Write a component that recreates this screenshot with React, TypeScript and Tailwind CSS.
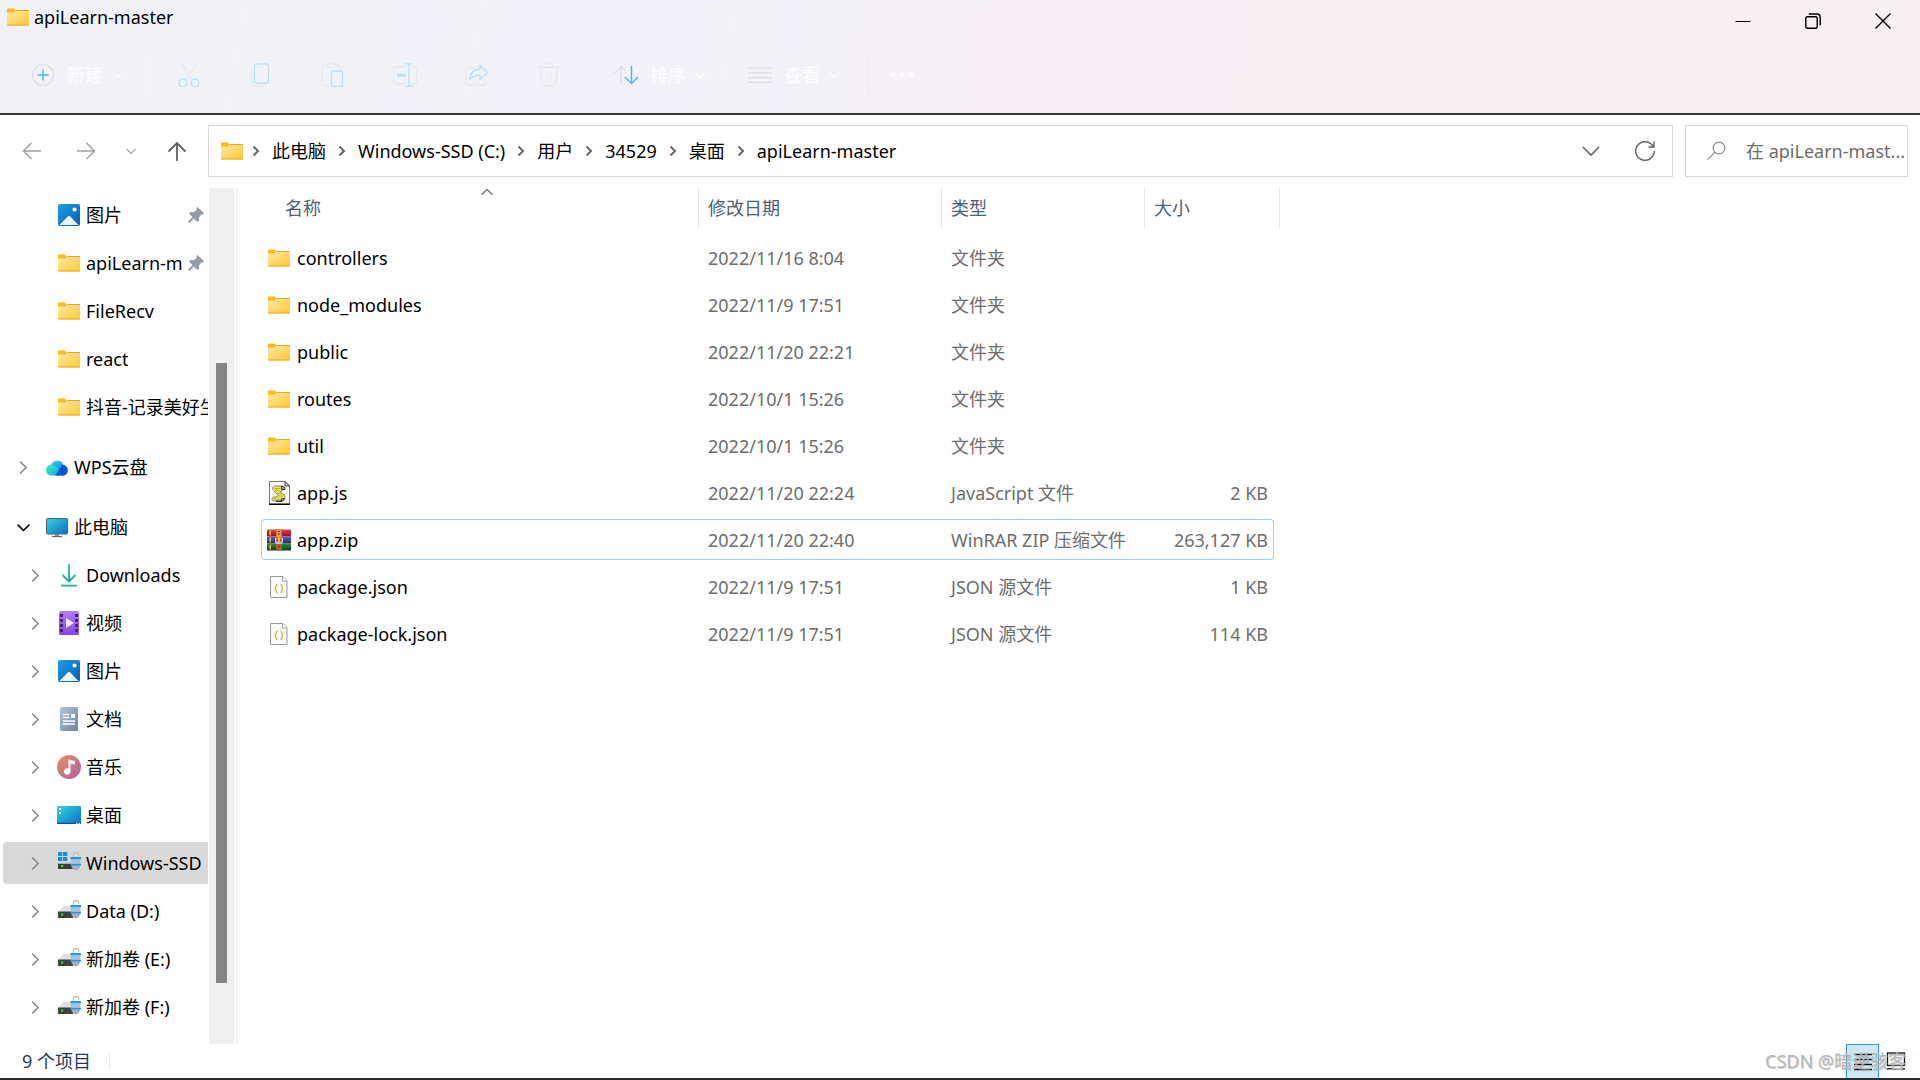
import type { ReactNode } from 'react'

type IconName =
  | 'folder'
  | 'picture'
  | 'cloud'
  | 'pc'
  | 'download'
  | 'video'
  | 'document'
  | 'music'
  | 'desktop'
  | 'system'
  | 'drive'
  | 'js'
  | 'zip'
  | 'json'

function Gradients() {
  return (
    <svg width="0" height="0" className="absolute" aria-hidden="true">
      <defs>
        <linearGradient id="folder" x1="0" y1="0" x2="1" y2="1">
          <stop offset="0" stopColor="#ffe9a6" />
          <stop offset="1" stopColor="#ffc832" />
        </linearGradient>
        <linearGradient id="picture" x1="0" y1="0" x2="1" y2="1">
          <stop offset="0" stopColor="#1ba0e6" />
          <stop offset="1" stopColor="#0a5cb4" />
        </linearGradient>
        <linearGradient id="screen" x1="0" y1="0" x2="1" y2="1">
          <stop offset="0" stopColor="#33d6e6" />
          <stop offset="1" stopColor="#0b6cc4" />
        </linearGradient>
        <linearGradient id="cloudLeft" x1="0" y1="0" x2="1" y2="1">
          <stop offset="0" stopColor="#3ff0b8" />
          <stop offset="1" stopColor="#12a8f0" />
        </linearGradient>
        <linearGradient id="cloudTop" x1="0" y1="0" x2="1" y2="1">
          <stop offset="0" stopColor="#2ec8f8" />
          <stop offset="1" stopColor="#0b6ff0" />
        </linearGradient>
        <linearGradient id="arrow" x1="0" y1="0" x2="1" y2="1">
          <stop offset="0" stopColor="#2ecb86" />
          <stop offset="1" stopColor="#0da3a0" />
        </linearGradient>
        <linearGradient id="video" x1="0" y1="0" x2="0" y2="1">
          <stop offset="0" stopColor="#b57bf6" />
          <stop offset="1" stopColor="#8a45e0" />
        </linearGradient>
        <linearGradient id="doc" x1="0" y1="0" x2="1" y2="1">
          <stop offset="0" stopColor="#b3c4d8" />
          <stop offset="1" stopColor="#6986a5" />
        </linearGradient>
        <linearGradient id="music" x1="0" y1="0" x2="1" y2="1">
          <stop offset="0" stopColor="#f29058" />
          <stop offset="1" stopColor="#a460ac" />
        </linearGradient>
        <linearGradient id="red" x1="0" y1="0" x2="0" y2="1">
          <stop offset="0" stopColor="#e0405e" />
          <stop offset="1" stopColor="#8e0f2c" />
        </linearGradient>
        <linearGradient id="blue" x1="0" y1="0" x2="0" y2="1">
          <stop offset="0" stopColor="#6263c8" />
          <stop offset="1" stopColor="#222370" />
        </linearGradient>
        <linearGradient id="green" x1="0" y1="0" x2="0" y2="1">
          <stop offset="0" stopColor="#229050" />
          <stop offset="1" stopColor="#083f1e" />
        </linearGradient>
      </defs>
    </svg>
  )
}

const padlock = (
  <>
    <path d="M16.500 7.500V4a2.600 2.600 0 0 1 5.200 0v1" fill="none" stroke="#bcc8d1" strokeWidth="1.500" />
    <path d="M14.500 8H23v8l-1.500 2.500-2.500 1-2.500-1L14.500 16z" fill="#a7b3bd" />
    <path d="M13.500 6h10.500v2.300h-10.500zM13.500 12.700h10.500v1.800h-10.500z" fill="#2b93dd" />
    <path d="M14 8.300h9.500v4.400H14z" fill="#9fc4e0" />
  </>
)

const shapes: Record<IconName, ReactNode> = {
  folder: (
    <>
      <path d="M1 4.500a1 1 0 0 1 1-1h6l1.500 2v3H1z" fill="#fbb917" />
      <path d="M1 7.500h7l1.500-2H22a1 1 0 0 1 1 1v13a1 1 0 0 1-1 1H2a1 1 0 0 1-1-1z" fill="url(#folder)" />
      <path d="M9.500 5.500H23M1.200 20H22.800" stroke="#eda91c" strokeWidth="1" />
    </>
  ),
  picture: (
    <>
      <rect x="1" y="1" width="22" height="22" rx="2" fill="url(#picture)" />
      <path d="M2.500 22l8.300-8.600a1.700 1.700 0 0 1 2.400 0L21.500 22z" fill="#eef6fd" />
      <circle cx="17.500" cy="6.500" r="2.100" fill="#fff" />
    </>
  ),
  cloud: (
    <>
      <path d="M6 11a6.500 6.500 0 0 1 12.500-1 5.500 5.500 0 0 1 .5 10.500h-7z" fill="url(#cloudTop)" />
      <path d="M17.500 9.700a5.500 5.500 0 0 1 1 10.800H9.500z" fill="#0a52d6" />
      <path d="M6.500 9.500c3 0 4.500 1.500 7.500 5l-3.500 5.500-2 .5h-2a5.500 5.500 0 0 1 0-11z" fill="url(#cloudLeft)" />
    </>
  ),
  pc: (
    <>
      <path d="M10 19h4v3h-4z" fill="#8b98a3" />
      <path d="M7 21.500h10" stroke="#5a6670" strokeWidth="1.200" />
      <rect x="1.500" y="3.500" width="21" height="15.500" rx="1" fill="url(#screen)" stroke="#53626e" />
    </>
  ),
  download: (
    <g fill="none" stroke="url(#arrow)" strokeWidth="1.800">
      <path d="M12 1l.1 17M5.500 12l6.500 6.500 6.500-6.500" />
      <path d="M4 22.500l16 .1" />
    </g>
  ),
  video: (
    <>
      <rect x="2" y="0" width="20" height="24" rx="1.500" fill="url(#video)" />
      <path
        d="M3 3h3v3H3zM3 8h3v3H3zM3 13h3v3H3zM3 18h3v3H3zM18 3h3v3h-3zM18 8h3v3h-3zM18 13h3v3h-3zM18 18h3v3h-3z"
        fill="#44247c"
      />
      <path d="M9 7l8 5-8 5z" fill="#f4effc" />
    </>
  ),
  document: (
    <>
      <rect x="3" y="0" width="18" height="24" rx="1.500" fill="url(#doc)" />
      <path d="M6 7.500h6M6 10.500h6M6 14h12M6 17h12" stroke="#fff" strokeWidth="1.300" />
      <path d="M14 7h4v4h-4z" fill="#fff" />
    </>
  ),
  music: (
    <>
      <circle cx="12" cy="12" r="12" fill="url(#music)" />
      <path d="M11.500 4.500l6.500 1.500v3.500l-4.500-1V16.500a3.300 3.300 0 1 1-2-3z" fill="#fff" />
    </>
  ),
  desktop: (
    <>
      <rect x="0" y="3" width="24" height="18" rx="1" fill="url(#screen)" />
      <path d="M2 5h2v2H2zM2 9h2v2H2z" fill="#fff" />
      <path d="M0 20.300h24" stroke="#0b4f8c" strokeWidth="1.200" />
      <path d="M19 20.300h1.500M21.500 20.300h1.500" stroke="#fff" strokeWidth="1" />
    </>
  ),
  system: (
    <>
      <path d="M1 1h4.300v4H1zM6 1h4.300v4H6zM1 6h4.300v4H1zM6 6h4.300v4H6z" fill="#1190e0" />
      <path d="M1 12.500h15V18H1z" fill="#3a3a3a" />
      <path d="M3 11h12l1 1.500H1z" fill="#c9ccd0" />
      <path d="M4 14h2.200v2H4z" fill="#3be04a" />
      {padlock}
    </>
  ),
  drive: (
    <>
      <path d="M6 7h9v6H1z" fill="#dfe1e4" />
      <path d="M1 12.500h15V19H1z" fill="#3f4040" />
      <path d="M4 14.500h2.200v2H4z" fill="#3be04a" />
      {padlock}
    </>
  ),
  js: (
    <>
      <path d="M2.500.5H18l4.500 4.500v18H2.500z" fill="#fff" stroke="#7a7a7a" />
      <path d="M2 23.300h21" stroke="#000" strokeWidth="1.400" />
      <path d="M18 .5v4.500h4.500z" fill="#d8d8d8" stroke="#222" strokeWidth=".8" />
      <path
        d="M15.500 5H8.500C5.500 5 4.500 8 6.500 9.500l3.500 3.500c1 1 .5 2-.5 3H6c-1.500 0-1.500 4 .5 4H14c4 0 5-4 3-6l-4-3.500 3-1c2-1 1-4-.5-4z"
        fill="#e6e768"
        stroke="#6e6f3c"
        strokeWidth=".8"
      />
      <path d="M7.500 7.500h6M8 9.500h4M10 12l5 .5M11.500 15h4.500M7 18h6" stroke="#a9aa30" strokeWidth=".9" />
      <path d="M14.500 5c3 0 4 1.500 3.500 3.500h-3.500zM14.500 17.500h3l-1.500 2.500h-2z" fill="#8d8d9a" stroke="#222" strokeWidth=".7" />
      <path d="M9 20.300h6" stroke="#111" strokeWidth="1" />
    </>
  ),
  zip: (
    <>
      <rect x="0" y="1.500" width="24" height="7" fill="url(#red)" />
      <rect x="0" y="8.500" width="24" height="7" fill="url(#blue)" />
      <rect x="0" y="15.500" width="24" height="7" fill="url(#green)" />
      <path d="M2.500 2.500h1.500v5H2.500zM2.500 9.500h1.500v5H2.500zM2.500 16.500h1.500v5H2.500z" fill="#ffb62e" />
      <rect x="9" y="1.500" width="6" height="21" fill="#b65c1a" />
      <rect x="9.500" y="1.500" width="5" height="9" rx="1" fill="#e89a34" />
      <path d="M11 3.500h2M11 6h2M11 18.500h2" stroke="#7a3c0c" strokeWidth="1" />
      <path d="M8.700 10v4a1 1 0 0 0 1 1h4.600a1 1 0 0 0 1-1v-4" fill="none" stroke="#dcdcde" strokeWidth="1.300" />
      <path d="M12 10v4" stroke="#e8e8ea" strokeWidth="1.200" />
    </>
  ),
  json: (
    <>
      <path d="M3.500 1.500H16l4 4v17H3.500z" fill="#f9f9f9" stroke="#9a9a9a" />
      <path d="M15.500 1.500v4.500H20" fill="#fff" stroke="#9a9a9a" strokeWidth=".9" />
      <path
        d="M10.500 9.500c-1.500 0-1.500.5-1.500 2s0 1.800-1.200 2c1.200.2 1.200.5 1.200 2s0 2 1.500 2M13.500 9.500c1.500 0 1.500.5 1.500 2s0 1.800 1.200 2c-1.200.2-1.200.5-1.200 2s0 2-1.500 2"
        fill="none"
        stroke="#b9bd3a"
        strokeWidth="1.300"
      />
    </>
  ),
}

function Icon({ name }: { name: IconName }) {
  return (
    <svg viewBox="0 0 24 24" className="h-6 w-6 shrink-0" aria-hidden="true">
      {shapes[name]}
    </svg>
  )
}

function Chevron({ d, className, size = 10, width = 1.2 }: { d: string; className?: string; size?: number; width?: number }) {
  return (
    <svg
      width={size}
      height={size}
      viewBox="0 0 10 10"
      fill="none"
      stroke="currentColor"
      strokeWidth={width}
      className={`shrink-0 ${className ?? ''}`}
      aria-hidden="true"
    >
      <path d={d} />
    </svg>
  )
}

const DOWN = 'M.5 2.800L5 7.300L9.500 2.800'
const RIGHT = 'M2.500 .5L7 5L2.500 9.500'
const UP = 'M.5 7.300L5 2.800L9.500 7.300'

const tools: { label: string; icon: ReactNode }[] = [
  {
    label: '剪切',
    icon: (
      <>
        <path d="M5 1l9.500 15.500M19 1L9.500 16.500" stroke="#e8e8ec" />
        <circle cx="6" cy="20" r="3.900" stroke="#b2e0fd" />
        <circle cx="18" cy="20" r="3.900" stroke="#b2e0fd" />
      </>
    ),
  },
  {
    label: '复制',
    icon: (
      <>
        <path d="M4.500 4.500C3 5 2.500 6 2.500 7.500V19c0 3 1.500 4.500 4.500 4.500h6c2 0 3-.5 4-2" stroke="#e8e8ec" />
        <rect x="5.500" y=".8" width="14" height="19.500" rx="2.500" stroke="#b2e0fd" />
      </>
    ),
  },
  {
    label: '粘贴',
    icon: (
      <>
        <path d="M8 23H3.500C2 23 1 22 1 20.500V5C1 3.500 2 2.500 3.500 2.500H6M14 2.500h2.500C18 2.500 18.500 3.500 18.500 5v1" stroke="#e8e8ec" />
        <rect x="6" y=".8" width="8" height="3.400" rx="1.700" stroke="#e8e8ec" />
        <rect x="10.500" y="8" width="11" height="15.500" rx="2" stroke="#b2e0fd" />
      </>
    ),
  },
  {
    label: '重命名',
    icon: (
      <>
        <path d="M13 3.500H3.500a3 3 0 0 0-3 3V18a3 3 0 0 0 3 3H13M19 3.500h1.500a3 3 0 0 1 3 3V18a3 3 0 0 1-3 3H19" stroke="#e8e8ec" />
        <path d="M12.500.8h7M12.500 23.500h7M16 .8v22.700" stroke="#b2e0fd" />
        <path d="M4 12.300h9" stroke="#b2e0fd" strokeWidth="2.800" />
      </>
    ),
  },
  {
    label: '共享',
    icon: (
      <>
        <path d="M9 4.500H4a3 3 0 0 0-3 3V19a3 3 0 0 0 3 3h13a3 3 0 0 0 3-3v-2.500" stroke="#e8e8ec" />
        <path d="M15 2.500l7.500 7-7.500 7v-4c-4.500-.5-7.500 1-10 3.500 0-6 4-10 10-10z" stroke="#b2e0fd" />
      </>
    ),
  },
  {
    label: '删除',
    icon: (
      <g stroke="#e8e8ec">
        <path d="M1 4.300h22M8.500 4a3.500 3.500 0 0 1 7 0M3.500 4.500l1.700 16a3 3 0 0 0 3 2.700h7.600a3 3 0 0 0 3-2.700l1.700-16M10 9.500v8M14 9.500v8" />
      </g>
    ),
  },
]

function Separator() {
  return <div className="h-12 w-px bg-[#f6f5fa]" />
}

function Header() {
  return (
    <header className="border-b-2 border-[#3a3a3a] bg-[linear-gradient(100deg,#f3f1f8_0%,#f1f3f9_25%,#f2f2f9_38%,#f9eef6_55%,#f9eff3_75%,#f9eff2_100%)]">
      <div className="flex items-start justify-between">
        <h1 className="flex h-[34px] items-center gap-[4px] pl-[6px]">
          <Icon name="folder" />
          <span>apiLearn-master</span>
        </h1>
        <div className="flex pr-[2px]">
          <button aria-label="最小化" className="flex h-[42px] w-[70px] items-center justify-center">
            <svg width="16" height="16" stroke="#000">
              <path d="M.5 8.500h15" />
            </svg>
          </button>
          <button aria-label="还原" className="flex h-[42px] w-[70px] items-center justify-center">
            <svg width="16" height="16" fill="none" stroke="#000" strokeWidth="1.400">
              <rect x=".8" y="3.800" width="11.400" height="11.400" rx="1.500" />
              <path d="M3.800 1H12c2 0 3.200 1.200 3.200 3.200v8" />
            </svg>
          </button>
          <button aria-label="关闭" className="flex h-[42px] w-[70px] items-center justify-center">
            <svg width="16" height="16" stroke="#000" strokeWidth="1.400">
              <path d="M.5.5l15 15M15.500.5l-15 15" />
            </svg>
          </button>
        </div>
      </div>

      <div className="flex h-[71px] items-center pb-[6px] pl-[31px] text-white">
        <button className="mr-[27px] flex items-center">
          <svg width="24" height="24" fill="none">
            <circle cx="12" cy="12" r="10.500" stroke="#dcdce0" strokeWidth="1.200" />
            <path d="M12 6.500v11M6.500 12h11" stroke="#42b8fb" strokeWidth="1.400" />
          </svg>
          <span className="mr-[9px] ml-3">新建</span>
          <Chevron d={DOWN} />
        </button>
        <Separator />
        <div className="mx-[3px] flex">
          {tools.map(({ label, icon }) => (
            <button key={label} aria-label={label} className="flex w-[72px] justify-center">
              <svg width="24" height="24" fill="none" strokeWidth="1.300">
                {icon}
              </svg>
            </button>
          ))}
        </div>
        <Separator />
        <button className="mr-[43px] ml-[25px] flex items-center">
          <svg width="24" height="24" fill="none" strokeWidth="1.400">
            <path d="M7 21V3.500M.5 10L7 3.500l4.500 4.500" stroke="#dcdce0" />
            <path d="M17.500 3v17.500M11 14l6.500 6.500L24 14" stroke="#42b8fb" />
          </svg>
          <span className="mr-[9px] ml-3">排序</span>
          <Chevron d={DOWN} />
        </button>
        <button className="mr-[25px] flex items-center">
          <svg width="24" height="24" stroke="#dcdce0" strokeWidth="1.200">
            <path d="M0 5h24M0 9.800h24M0 14.600h24M0 19.400h24" />
          </svg>
          <span className="mr-[9px] ml-3">查看</span>
          <Chevron d={DOWN} />
        </button>
        <Separator />
        <button aria-label="更多" className="ml-[24px]">
          <svg width="26" height="8" fill="#fff">
            <circle cx="3.500" cy="4" r="2.500" />
            <circle cx="13" cy="4" r="2.500" />
            <circle cx="22.500" cy="4" r="2.500" />
          </svg>
        </button>
      </div>
    </header>
  )
}

const crumbs = ['此电脑', 'Windows-SSD (C:)', '用户', '34529', '桌面', 'apiLearn-master']

function AddressRow() {
  return (
    <div className="flex items-center gap-3 pt-[10px] pr-3 pb-[5px]">
      <div className="flex w-[196px] shrink-0 items-center pl-[22px]">
        <button aria-label="后退" className="mr-[34px] text-[#a0a0a0]">
          <svg width="20" height="20" fill="none" stroke="currentColor" strokeWidth="1.400">
            <path d="M19 10H1.500M9.500 2l-8 8 8 8" />
          </svg>
        </button>
        <button aria-label="前进" className="mr-[30px] text-[#a0a0a0]">
          <svg width="20" height="20" fill="none" stroke="currentColor" strokeWidth="1.400">
            <path d="M1 10h17.500M10.500 2l8 8-8 8" />
          </svg>
        </button>
        <button aria-label="最近位置" className="mr-[31px] text-[#a0a0a0]">
          <Chevron d={DOWN} />
        </button>
        <button aria-label="上移" className="text-[#606060]">
          <svg width="20" height="20" fill="none" stroke="currentColor" strokeWidth="1.800">
            <path d="M10 20V2M1.500 10.500L10 2l8.500 8.500" />
          </svg>
        </button>
      </div>

      <div className="flex h-[52px] grow items-center border border-[#d9d9d9] pl-[11px]">
        <Icon name="folder" />
        <nav className="-ml-1 flex grow items-center text-black">
          {crumbs.map((crumb) => (
            <div key={crumb} className="flex items-center">
              <Chevron d={RIGHT} width={2} className="mx-[11px] text-[#666]" />
              <a href="#">{crumb}</a>
            </div>
          ))}
        </nav>
        <button aria-label="历史记录" className="flex w-[54px] justify-center text-[#666]">
          <Chevron d={DOWN} size={18} width={0.9} />
        </button>
        <button aria-label="刷新" className="flex w-[54px] justify-center text-[#666]">
          <svg width="22" height="22" fill="none" stroke="currentColor" strokeWidth="1.500">
            <path d="M19 6.200A9.300 9.300 0 1 0 20.300 11M20 1.500v5.500h-5.500" />
          </svg>
        </button>
      </div>

      <label className="flex h-[52px] w-[223px] shrink-0 items-center border border-[#d9d9d9] pl-[20px]">
        <svg width="20" height="20" fill="none" stroke="#8a8a8a" strokeWidth="1.200" className="shrink-0" aria-hidden="true">
          <circle cx="13" cy="7" r="5.800" />
          <path d="M9 11.200L1.500 18.700" />
        </svg>
        <input
          type="text"
          aria-label="搜索"
          placeholder="在 apiLearn-mast..."
          className="ml-5 w-full min-w-0 outline-none placeholder:text-[#6d6d6d]"
        />
      </label>
    </div>
  )
}

type TreeItem = {
  label: string
  icon: IconName
  root?: boolean
  open?: boolean
  leaf?: boolean
  pinned?: boolean
  selected?: boolean
}

const tree: TreeItem[][] = [
  [
    { label: '图片', icon: 'picture', leaf: true, pinned: true },
    { label: 'apiLearn-m', icon: 'folder', leaf: true, pinned: true },
    { label: 'FileRecv', icon: 'folder', leaf: true },
    { label: 'react', icon: 'folder', leaf: true },
    { label: '抖音-记录美好生', icon: 'folder', leaf: true },
  ],
  [{ label: 'WPS云盘', icon: 'cloud', root: true }],
  [
    { label: '此电脑', icon: 'pc', root: true, open: true },
    { label: 'Downloads', icon: 'download' },
    { label: '视频', icon: 'video' },
    { label: '图片', icon: 'picture' },
    { label: '文档', icon: 'document' },
    { label: '音乐', icon: 'music' },
    { label: '桌面', icon: 'desktop' },
    { label: 'Windows-SSD', icon: 'system', selected: true },
    { label: 'Data (D:)', icon: 'drive' },
    { label: '新加卷 (E:)', icon: 'drive' },
    { label: '新加卷 (F:)', icon: 'drive' },
  ],
]

function TreeRow({ item }: { item: TreeItem }) {
  return (
    <li
      className={`flex h-[42px] items-center rounded-l-sm ${item.root ? 'pl-[10px]' : 'pl-[22px]'} ${
        item.selected ? 'bg-[#d9d9d9]' : ''
      }`}
    >
      <div className="mr-3 flex w-5 shrink-0 justify-center">
        {!item.leaf && (
          <button aria-label={item.label} className={item.open ? 'text-black' : 'text-[#8c8c8c]'}>
            <Chevron d={item.open ? DOWN : RIGHT} size={13} />
          </button>
        )}
      </div>
      <a href="#" className="flex min-w-0 grow items-center gap-[5px]">
        <Icon name={item.icon} />
        <span className="overflow-hidden whitespace-nowrap">{item.label}</span>
      </a>
      {item.pinned && (
        <svg width="16" height="16" className="mr-1 ml-[3px] shrink-0" fill="#939da5" aria-hidden="true">
          <path d="M9.500 0L16 6l-1 1.500-1.500-.2-2.500 3.200.2 3-1.700 1.500-3.700-3.500L1.500 16 0 15.500l.3-1.300L4.500 10 1 6.500 2.500 5l3.200.2L8.800 2.700 8.500 1z" />
        </svg>
      )}
    </li>
  )
}

function Sidebar() {
  return (
    <aside className="mt-[6px] flex w-[238px] shrink-0 border-r-2 border-[#f5f5f5]">
      <nav className="flex w-[208px] flex-col gap-[18px] pt-[6px] pb-4 pl-[3px]">
        {tree.map((group) => (
          <ul key={group[0].label} className="flex flex-col gap-[6px]">
            {group.map((item) => (
              <TreeRow key={item.label} item={item} />
            ))}
          </ul>
        ))}
      </nav>
      <div className="ml-px flex w-[25px] flex-col items-center bg-[#f0f0f0]">
        <div className="flex-[175]" />
        <div className="w-[11px] flex-[620] bg-[#858585]" />
        <div className="flex-[61]" />
      </div>
    </aside>
  )
}

const files: { name: string; icon: IconName; date: string; type: string; size?: string; selected?: boolean }[] = [
  { name: 'controllers', icon: 'folder', date: '2022/11/16 8:04', type: '文件夹' },
  { name: 'node_modules', icon: 'folder', date: '2022/11/9 17:51', type: '文件夹' },
  { name: 'public', icon: 'folder', date: '2022/11/20 22:21', type: '文件夹' },
  { name: 'routes', icon: 'folder', date: '2022/10/1 15:26', type: '文件夹' },
  { name: 'util', icon: 'folder', date: '2022/10/1 15:26', type: '文件夹' },
  { name: 'app.js', icon: 'js', date: '2022/11/20 22:24', type: 'JavaScript 文件', size: '2 KB' },
  { name: 'app.zip', icon: 'zip', date: '2022/11/20 22:40', type: 'WinRAR ZIP 压缩文件', size: '263,127 KB', selected: true },
  { name: 'package.json', icon: 'json', date: '2022/11/9 17:51', type: 'JSON 源文件', size: '1 KB' },
  { name: 'package-lock.json', icon: 'json', date: '2022/11/9 17:51', type: 'JSON 源文件', size: '114 KB' },
]

function FileTable() {
  return (
    <main className="grow pl-[23px]">
      <table className="w-[1019px] table-fixed border-separate border-spacing-x-0 border-spacing-y-[6px] text-left whitespace-nowrap">
        <colgroup>
          <col className="w-[438px]" />
          <col className="w-[243px]" />
          <col className="w-[203px]" />
          <col className="w-[129px]" />
          <col className="w-[6px]" />
        </colgroup>
        <thead className="text-[#4c607a]">
          <tr className="h-[43px] align-top">
            <th className="p-0 font-normal">
              <div className="relative ml-[15px] flex h-10 items-center border-r border-[#e5e5e5] pl-[9px]">
                名称
                <Chevron d={UP} size={12} width={1} className="absolute top-[-2px] left-1/2 -translate-x-1/2 text-[#666]" />
              </div>
            </th>
            <th className="p-0 font-normal">
              <div className="flex h-10 items-center border-r border-[#e5e5e5] pl-[9px]">修改日期</div>
            </th>
            <th className="p-0 font-normal">
              <div className="flex h-10 items-center border-r border-[#e5e5e5] pl-[9px]">类型</div>
            </th>
            <th colSpan={2} className="p-0 font-normal">
              <div className="flex h-10 items-center border-r border-[#e5e5e5] pl-[9px]">大小</div>
            </th>
          </tr>
        </thead>
        <tbody className="text-[#6d6d6d]">
          {files.map((file) => {
            const edge = file.selected ? 'border-[#99d1ff]' : 'border-transparent'
            return (
              <tr key={file.name} className="h-[41px]">
                <td className={`rounded-l-sm border-y border-l p-0 pl-[5px] text-black ${edge}`}>
                  <div className="flex items-center gap-[6px]">
                    <Icon name={file.icon} />
                    {file.name}
                  </div>
                </td>
                <td className={`border-y p-0 pl-[9px] ${edge}`}>{file.date}</td>
                <td className={`border-y p-0 pl-[9px] ${edge}`}>{file.type}</td>
                <td className={`rounded-r-sm border-y border-r p-0 pr-[5px] text-right ${edge}`}>{file.size}</td>
              </tr>
            )
          })}
        </tbody>
      </table>
    </main>
  )
}

function StatusBar() {
  return (
    <footer className="relative flex h-9 items-center border-b-2 border-[#2a2a2c] pl-[22px] text-[#1e395b]">
      <span>9 个项目</span>
      <div className="ml-[18px] h-[18px] w-px bg-[#e8e8e8]" />
      <div className="mr-[8px] ml-auto flex h-full">
        <button aria-label="详细信息" className="flex w-[33px] items-center justify-center border border-b-0 border-[#26a0da] bg-[#cce8f6]">
          <svg width="20" height="18" stroke="#111" strokeWidth="1.300">
            <path d="M1 1.500h18M1 6.500h18M1 11.500h18M1 16.500h18" />
          </svg>
        </button>
        <button aria-label="大图标" className="flex w-[33px] items-center justify-center">
          <svg width="20" height="18" fill="none" stroke="#111" strokeWidth="1.300">
            <rect x="1.500" y="1" width="17" height="12.500" />
            <path d="M1 16.800h18" />
          </svg>
        </button>
      </div>
      <span className="absolute right-[14px] text-[#b8b8b8] [text-shadow:1px_1px_0_#a0a0a080]">CSDN @暗逆骇客</span>
    </footer>
  )
}

export default function App() {
  return (
    <div className="flex min-h-screen flex-col bg-white font-['Noto_Sans','Noto_Sans_CJK_SC',sans-serif] text-[18px] leading-6 text-black">
      <Gradients />
      <Header />
      <AddressRow />
      <div className="flex grow">
        <Sidebar />
        <FileTable />
      </div>
      <StatusBar />
    </div>
  )
}
